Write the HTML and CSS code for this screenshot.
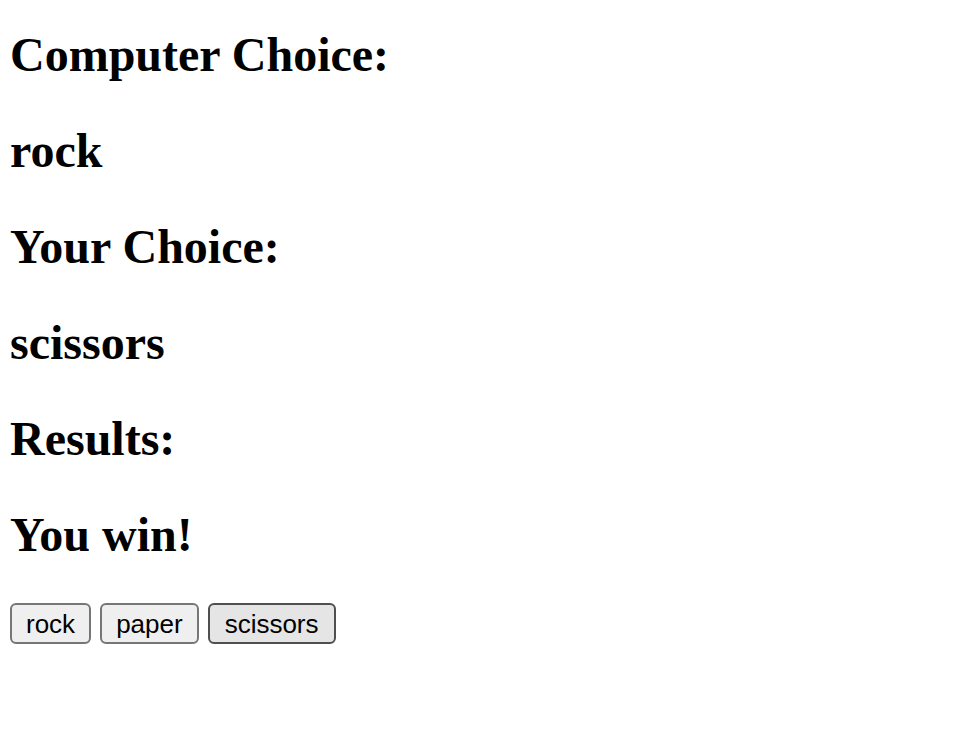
FILE: index.html
```html
<!DOCTYPE html>
<html>
<head>
<meta charset="utf-8">
<link rel="stylesheet" href="styles.css">
</head>
<body>
<div class="game">
  <h2 class="label first">Computer Choice:</h2>
  <h2 class="value">rock</h2>
  <h2 class="label">Your Choice:</h2>
  <h2 class="value">scissors</h2>
  <h2 class="label">Results:</h2>
  <h2 class="value">You win!</h2>
  <div class="choices">
    <button class="choice">rock</button>
    <button class="choice">paper</button>
    <button class="choice active">scissors</button>
  </div>
</div>
</body>
</html>
```
FILE: styles.css
```css
html, body {
  margin: 0;
  padding: 0;
  background: #ffffff;
}
body {
  padding: 0 10px;
  font-family: "Liberation Serif", "Times New Roman", serif;
  color: #000;
}
.game h2 {
  font-size: 48px;
  font-weight: bold;
  margin: 40px 0;
  line-height: 56px;
}
.game h2.first {
  margin-top: 27px;
}
.choices {
  display: flex;
  gap: 9px;
  margin-top: 40px;
}
.choice {
  font-family: "Liberation Sans", Arial, sans-serif;
  font-size: 26px;
  color: #000;
  background: #efefef;
  border: 2px solid #767676;
  border-radius: 6px;
  padding: 2px 14px;
  height: 41px;
  line-height: 30px;
}
.choice.active {
  background: #e5e5e5;
  border-color: #4f4f4f;
  padding: 2px 15px;
}
```
